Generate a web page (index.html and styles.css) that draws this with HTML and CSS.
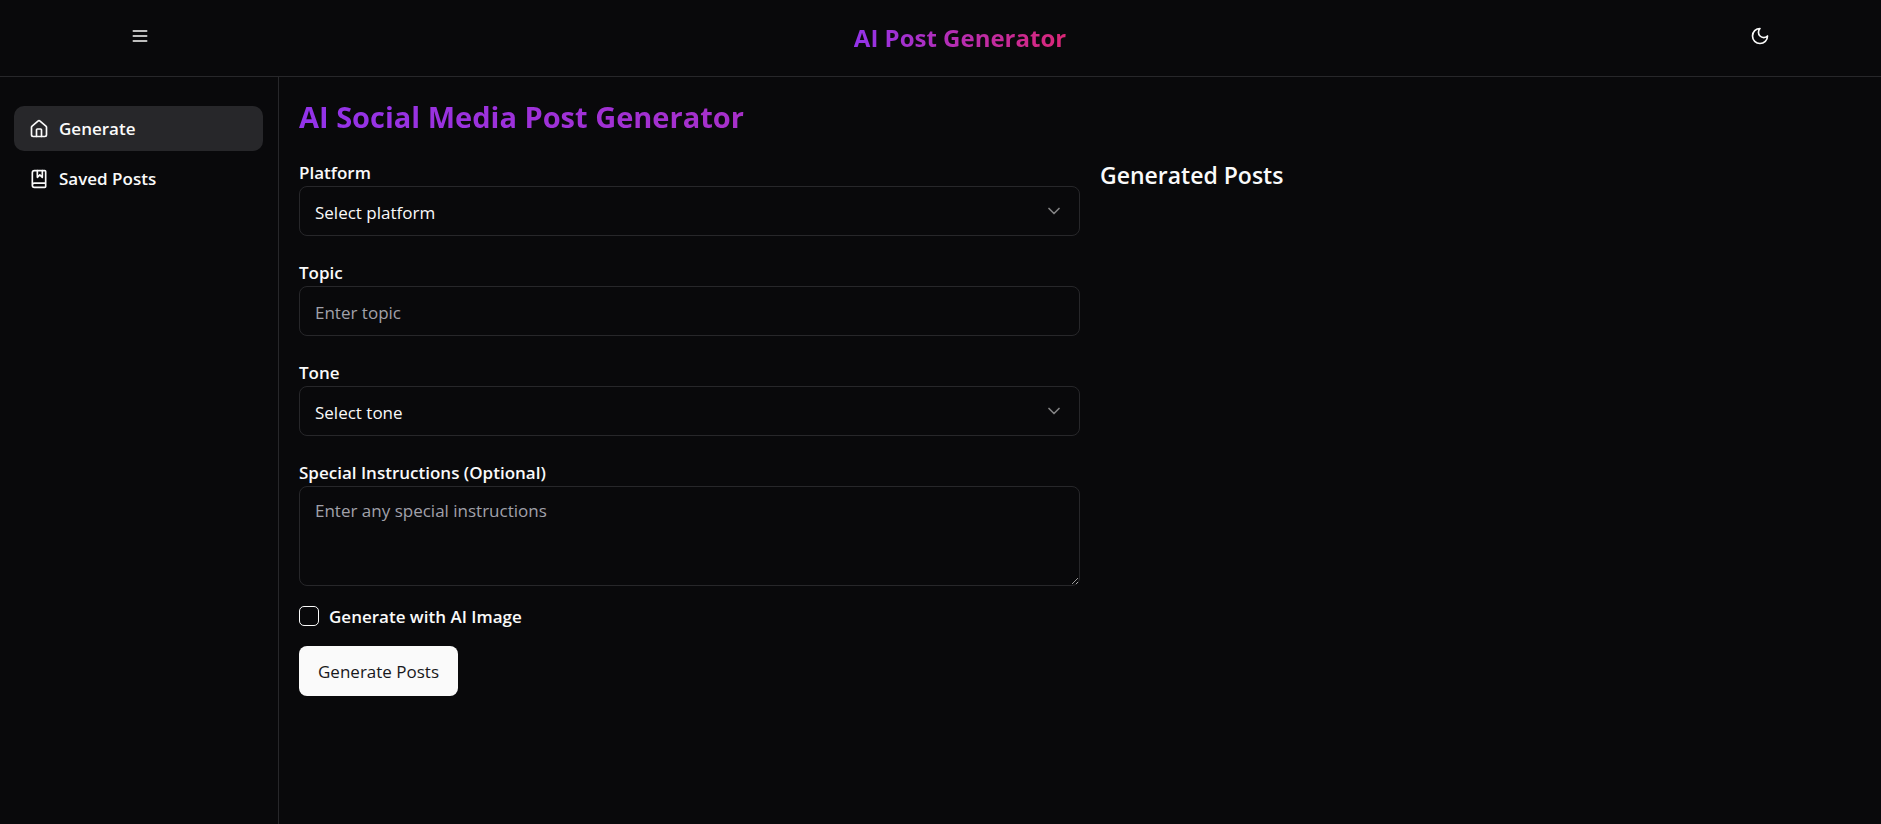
FILE: index.html
```html
<!DOCTYPE html>
<html lang="en">
<head>
<meta charset="utf-8">
<title>AI Post Generator</title>
<link rel="stylesheet" href="styles.css">
</head>
<body>
<header class="topbar">
  <button class="icon-button menu-button" type="button" aria-label="Toggle menu">
    <svg class="icon" viewBox="0 0 24 24"><path d="M4 6h16M4 12h16M4 18h16"/></svg>
  </button>
  <a class="brand gradient-text" href="#">AI Post Generator</a>
  <button class="icon-button" type="button" aria-label="Toggle theme">
    <svg class="icon" viewBox="0 0 24 24"><path d="M12 3a6 6 0 0 0 9 9 9 9 0 1 1-9-9Z"/></svg>
  </button>
</header>
<div class="shell">
  <nav class="sidebar">
    <a class="nav-link active" href="#">
      <svg class="icon" viewBox="0 0 24 24"><path d="M15 21v-8a1 1 0 0 0-1-1h-4a1 1 0 0 0-1 1v8"/><path d="M3 10a2 2 0 0 1 .709-1.528l7-5.999a2 2 0 0 1 2.582 0l7 5.999A2 2 0 0 1 21 10v9a2 2 0 0 1-2 2H5a2 2 0 0 1-2-2z"/></svg>
      Generate
    </a>
    <a class="nav-link" href="#">
      <svg class="icon" viewBox="0 0 24 24"><path d="M10 2v8l3-3 3 3V2"/><path d="M4 19.500v-15A2.500 2.500 0 0 1 6.500 2H19a1 1 0 0 1 1 1v18a1 1 0 0 1-1 1H6.500a1 1 0 0 1 0-5H20"/></svg>
      Saved Posts
    </a>
  </nav>
  <main class="content">
    <h1 class="page-title gradient-text">AI Social Media Post Generator</h1>
    <div class="columns">
      <form class="post-form">
        <div class="field">
          <label for="platform">Platform</label>
          <div class="select-wrap">
            <select class="control" id="platform"><option>Select platform</option></select>
            <svg class="icon chevron" viewBox="0 0 24 24"><path d="m6 9 6 6 6-6"/></svg>
          </div>
        </div>
        <div class="field">
          <label for="topic">Topic</label>
          <input class="control" id="topic" type="text" placeholder="Enter topic">
        </div>
        <div class="field">
          <label for="tone">Tone</label>
          <div class="select-wrap">
            <select class="control" id="tone"><option>Select tone</option></select>
            <svg class="icon chevron" viewBox="0 0 24 24"><path d="m6 9 6 6 6-6"/></svg>
          </div>
        </div>
        <div class="field">
          <label for="instructions">Special Instructions (Optional)</label>
          <textarea class="control notes" id="instructions" placeholder="Enter any special instructions"></textarea>
        </div>
        <div class="check-row">
          <input class="checkbox" id="image" type="checkbox">
          <label for="image">Generate with AI Image</label>
        </div>
        <button class="submit" type="button">Generate Posts</button>
      </form>
      <section>
        <h2 class="results-title">Generated Posts</h2>
      </section>
    </div>
  </main>
</div>
</body>
</html>
```

FILE: styles.css
```css
* {
  box-sizing: border-box;
}

body {
  margin: 0;
  min-height: 100vh;
  display: flex;
  flex-direction: column;
  background: #09090b;
  color: #fafafa;
  font: 17px/25px "Open Sans", "Noto Sans", sans-serif;
}

h1,
h2 {
  margin: 0;
}

a {
  color: inherit;
  text-decoration: none;
}

.icon {
  width: 20px;
  height: 20px;
  flex: none;
  fill: none;
  stroke: currentColor;
  stroke-width: 2;
  stroke-linecap: round;
  stroke-linejoin: round;
}

.gradient-text {
  background: linear-gradient(to right, #9333ea, #db2777);
  background-clip: text;
  -webkit-background-clip: text;
  color: transparent;
}

.topbar {
  display: flex;
  align-items: flex-start;
  justify-content: space-between;
  padding: 11px 96px 15px 115px;
  border-bottom: 1px solid #27272a;
}

.icon-button {
  display: flex;
  align-items: center;
  justify-content: center;
  width: 50px;
  height: 50px;
  padding: 0;
  border: 0;
  background: none;
  color: inherit;
}

.menu-button {
  margin-right: 20px;
}

.brand {
  align-self: flex-end;
  font-size: 24px;
  line-height: 46px;
  font-weight: 700;
}

.shell {
  flex: 1;
  display: flex;
}

.sidebar {
  flex: none;
  width: 279px;
  padding: 29px 15px 0 14px;
  border-right: 1px solid #27272a;
  display: flex;
  flex-direction: column;
  gap: 5px;
}

.nav-link {
  display: flex;
  align-items: center;
  gap: 10px;
  padding: 10px 15px;
  border-radius: 10px;
  font-weight: 600;
}

.nav-link.active {
  background: #27272a;
}

.content {
  flex: 1;
  padding: 20px 0 20px 20px;
}

.page-title {
  margin-bottom: 24px;
  font-size: 29px;
  line-height: 40px;
  font-weight: 700;
}

.columns {
  display: grid;
  grid-template-columns: 1fr 1fr;
  gap: 20px;
}

.post-form {
  display: flex;
  flex-direction: column;
  align-items: flex-start;
  gap: 20px;
}

.field {
  width: 100%;
  margin-bottom: 5px;
  display: flex;
  flex-direction: column;
}

.field:nth-of-type(4) {
  margin-bottom: 0;
}

label {
  font-weight: 600;
}

.field label {
  padding-bottom: 2px;
  line-height: 23px;
}

.control {
  display: block;
  width: 100%;
  height: 50px;
  padding: 2px 15px 0;
  border: 1px solid #27272a;
  border-radius: 8px;
  outline: 0;
  background: transparent;
  color: #fafafa;
  font: inherit;
  appearance: none;
}

.control::placeholder {
  color: #a1a1aa;
  opacity: 1;
}

.control option {
  background: #09090b;
}

.select-wrap {
  display: grid;
  align-items: center;
}

.select-wrap > * {
  grid-area: 1 / 1;
}

.chevron {
  justify-self: end;
  margin-right: 16px;
  opacity: 0.5;
  pointer-events: none;
}

.notes {
  height: 100px;
  padding: 11px 15px;
  resize: vertical;
}

.check-row {
  display: flex;
  align-items: center;
  gap: 10px;
  height: 20px;
}

.checkbox {
  appearance: none;
  width: 20px;
  height: 20px;
  margin: 0;
  border: 1px solid #fafafa;
  border-radius: 5px;
}

.submit {
  height: 50px;
  padding: 0 19px;
  border: 0;
  border-radius: 8px;
  background: #fafafa;
  color: #18181b;
  font: inherit;
  font-weight: 500;
}

.results-title {
  font-size: 23px;
  line-height: 28px;
  font-weight: 600;
}
```
